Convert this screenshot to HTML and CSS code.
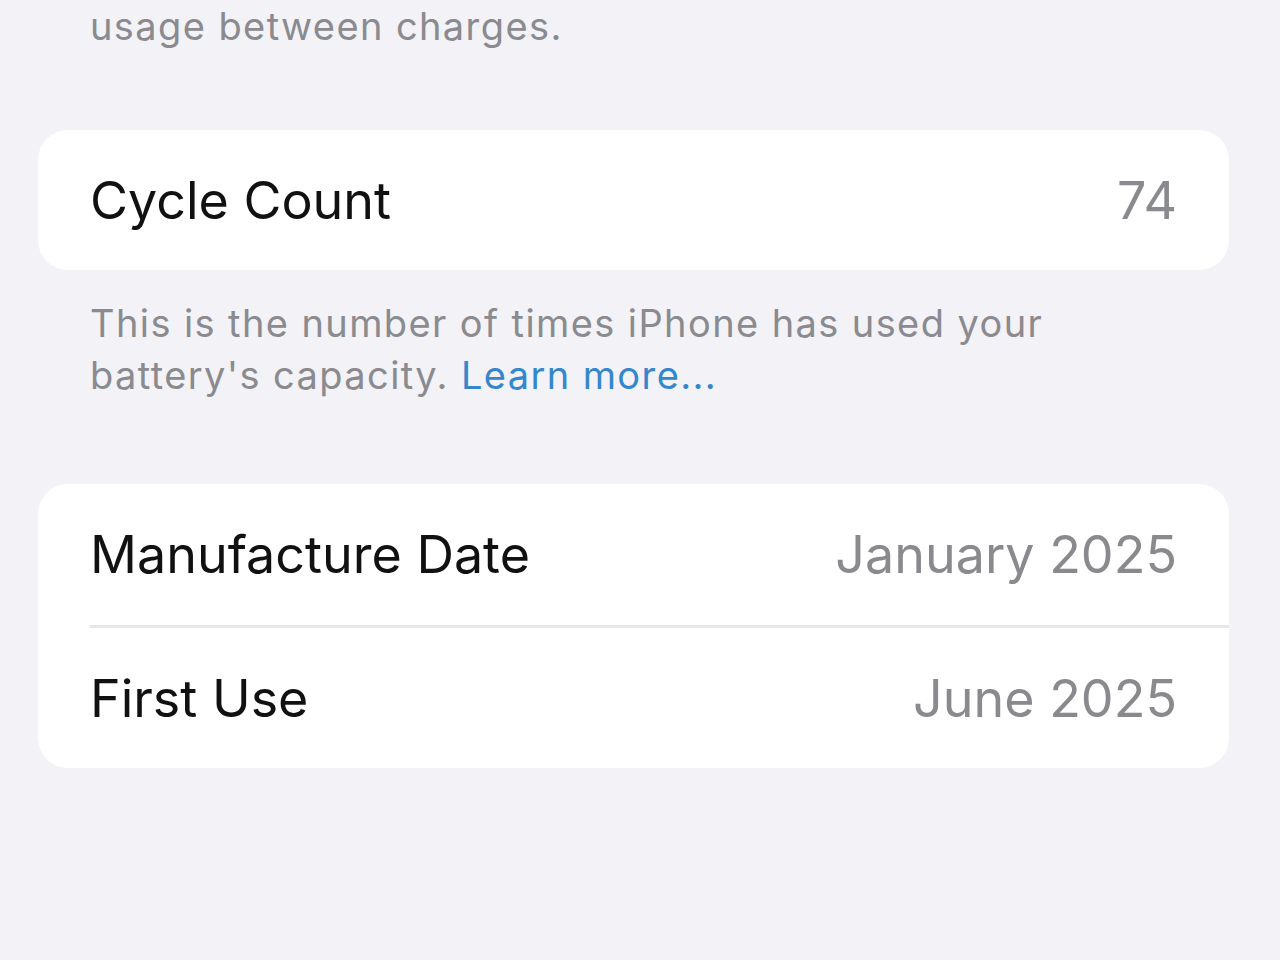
FILE: index.html
```html
<!DOCTYPE html>
<html lang="en">
<head>
    <meta charset="UTF-8">
    <meta name="viewport" content="width=device-width, initial-scale=1.0">
    <title>Battery Health</title>
    <link rel="stylesheet" href="styles.css">
</head>
<body>
    <p class="note note-top">new. Lower capacity may result in fewer hours of<br>usage between charges.</p>

    <div class="group group-cycle">
        <div class="row">
            <span class="label">Cycle Count</span>
            <span class="value">74</span>
        </div>
    </div>
    <p class="note">This is the number of times iPhone has used your<br>battery's capacity. <a class="link" href="#">Learn more...</a></p>

    <div class="group group-dates">
        <div class="row">
            <span class="label">Manufacture Date</span>
            <span class="value">January 2025</span>
        </div>
        <div class="row">
            <span class="label">First Use</span>
            <span class="value">June 2025</span>
        </div>
    </div>
</body>
</html>
```

FILE: styles.css
```css
html, body {
    height: 100%;
}
body {
    margin: 0;
    padding: 0 51px 0 38px;
    background-color: #f2f2f7;
    font-family: Inter, "Liberation Sans", Arial, sans-serif;
    overflow: hidden;
}
.note {
    margin: 27px 0 0;
    padding-left: 52px;
    font-size: 38px;
    line-height: 52px;
    letter-spacing: 1.4px;
    color: #8a8a8f;
    white-space: nowrap;
}
.note-top {
    margin-top: -52px;
}
.link {
    color: #3487cc;
    text-decoration: none;
}
.group {
    background-color: #ffffff;
    border-radius: 30px;
    overflow: hidden;
}
.group-cycle {
    margin-top: 78px;
}
.group-dates {
    margin-top: 83px;
}
.row {
    display: flex;
    justify-content: space-between;
    align-items: center;
    height: 140px;
    padding: 0 52px;
    font-size: 52px;
}
.group-dates .row {
    height: 141px;
}
.row + .row {
    height: 140px;
    border-top: 3px solid #e6e6ea;
    margin-left: 52px;
    padding-left: 0;
}
.label {
    color: #111111;
}
.value {
    color: #8a8a8e;
}
```
